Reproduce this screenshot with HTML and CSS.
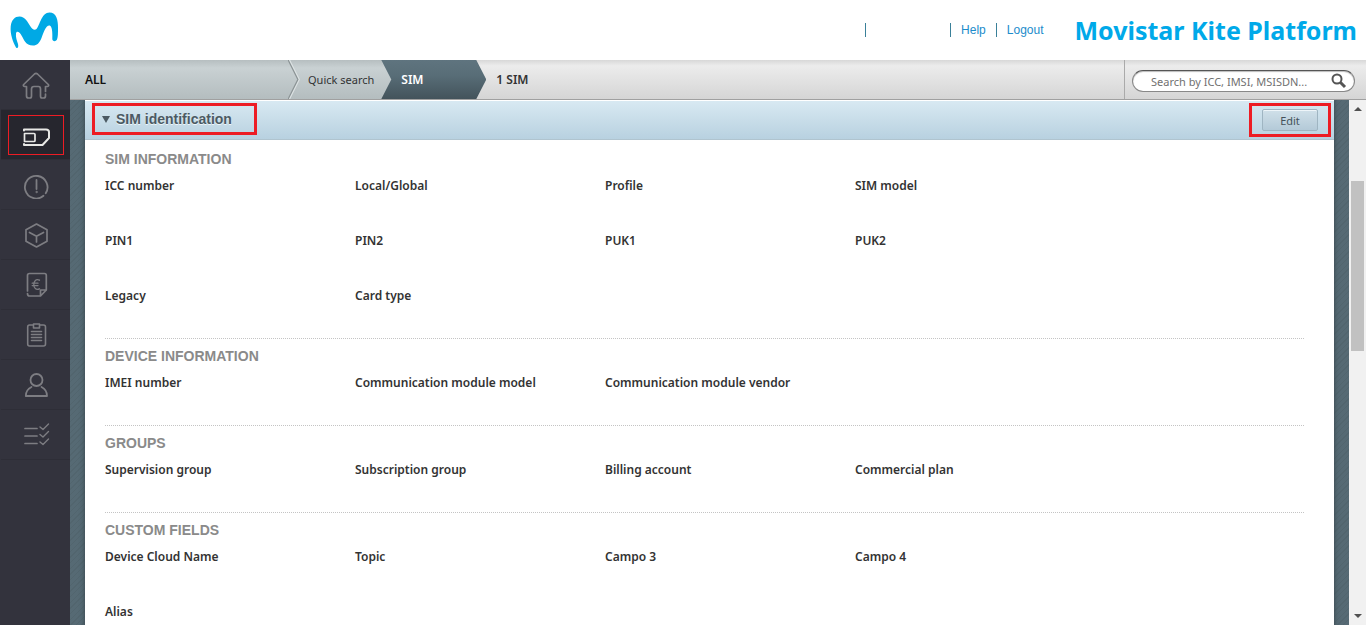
FILE: index.html
```html
<!DOCTYPE html>
<html lang="en">
<head>
<meta charset="utf-8">
<title>Movistar Kite Platform</title>
<link rel="stylesheet" href="styles.css">
</head>
<body>
<header class="topbar">
  <a class="logo" href="#" aria-label="Movistar">
    <svg width="50" height="38" viewBox="0 0 50 38"><path fill="#00a9e5" d="M6 36.500C3 31 0 23 .7 15.500C1.500 8.500 5 5.500 9.500 5.500C15 5.500 17.500 11 20.500 15.500C22 18 24.500 20 26.500 18C30 14 31.500 1.500 39.500 1.500C46.500 1.500 48 9 48 17C48 22 48 26 47 28.500C45.500 31 42.500 30.500 42.300 28C42.500 23.500 42.500 15.500 39.800 14.500C35.500 14 33.500 22 31.500 27C29.500 32 27 34.500 23 34.500C15.500 34.500 14 28.500 11.500 24.500C10 21.500 6.500 19 6 22.500C5.500 26 7 30 8 33C8.800 36.500 7.500 38 6 36.500Z"/></svg>
  </a>
  <nav class="links" aria-label="Account">
    <span class="account"></span>
    <a href="#">Help</a>
    <a href="#">Logout</a>
  </nav>
  <strong class="brand">Movistar Kite Platform</strong>
</header>
<div class="shell">
  <nav class="sidebar" aria-label="Main">
    <a href="#" aria-label="Home"><svg viewBox="0 0 28 28"><path stroke-width="1.700" d="M4.500 15.500H2.500Q.7 15 1.700 13.500L12.500 3Q14 1.700 15.500 3L26.300 13.500Q27.300 15 25.500 15.500H23.500V20.500M23.500 23V25Q23.500 27 21.500 27H20Q18.500 27 18.500 25V18Q18.500 15.500 16.500 15.500H12Q9.500 15.500 9.500 18V25Q9.500 27 8 27H6.500Q4.500 27 4.500 25V15.500"/></svg></a>
    <a href="#" class="active" aria-label="SIM inventory"><span class="mark"><svg viewBox="0 0 28 28"><path stroke-width="2" d="M2 9.500V8.500H24Q27 8.500 27 11V17L20.500 24H2V23"/><path stroke-width="1.700" d="M2.500 12.500H12Q13 12.500 13 13.500V19.500Q13 20.500 12 20.500H2.500Z"/></svg></span></a>
    <a href="#" aria-label="Alarms"><svg viewBox="0 0 28 28"><path stroke-width="1.800" d="M21.500 24.800A11.300 11.300 0 1 1 23.700 22.300M14.500 9V18"/><circle cx="14.500" cy="21" r=".7"/></svg></a>
    <a href="#" aria-label="Products"><svg viewBox="0 0 28 28"><path stroke-width="1.700" d="M14.500 3L25 8.800V20.200L14.500 26L4 20.200V8.800ZM7.500 11.500L14.500 15.300L21.500 11.500M14.500 15.300V21"/></svg></a>
    <a href="#" aria-label="Billing"><svg viewBox="0 0 28 28"><path stroke-width="1.700" d="M5.500 20V4.500Q5.500 2.500 7.500 2.500H22.500Q24.300 2.500 24.300 4.500V19L18.500 25H7.500Q5.500 25 5.500 22.500M18.500 25V19H24.300"/><path stroke-width="1.300" d="M17.500 9.200C14 7.500 11.800 10 11.800 13.500C11.800 17 14 19.500 17.500 17.800M10.200 12.200H16M10.200 14.600H16"/></svg></a>
    <a href="#" aria-label="Reports"><svg viewBox="0 0 28 28"><path stroke-width="1.600" d="M11.500 4H7.500Q5.700 4 5.700 6V23Q5.700 25 7.500 25H21.500Q23.500 25 23.500 23V6Q23.500 4 21.500 4H17.500M11.500 3H17.500V7H11.500ZM9.500 10.500H19.500M9.500 13.500H19.500M9.500 16.500H19.500M9.500 19.500H19.500"/></svg></a>
    <a href="#" aria-label="Users"><svg viewBox="0 0 28 28"><path stroke-width="1.800" d="M9.500 16C5.500 18 3.800 21.500 3.800 25H25C25 21.500 23.500 18 19.500 16"/><circle stroke-width="1.800" cx="14.500" cy="9" r="6"/></svg></a>
    <a href="#" aria-label="Tasks"><svg viewBox="0 0 28 28"><path stroke-width="1.700" d="M3 7.500H15M3 15H15M3 22.500H15"/><path stroke-width="1.400" d="M18 6L21 8.500L26.500 3M18 13.500L21 16L26.500 10.500M18 21L21 23.500L26.500 18"/></svg></a>
  </nav>
  <main class="main">
    <div class="crumbbar">
      <nav class="crumbs" aria-label="Breadcrumb">
        <a class="crumb all" href="#">ALL</a>
        <svg class="chevron" viewBox="0 0 12 40" aria-hidden="true"><path d="M1 0L11 20L1 40" fill="none" stroke="#dce2e3" stroke-width="2"/><path d="M0 0L10 20L0 40" fill="none" stroke="#8b9395" stroke-width="1.300"/></svg>
        <a class="crumb quick" href="#">Quick search</a>
        <a class="crumb current" href="#">SIM</a>
      </nav>
      <span class="count">1 SIM</span>
      <form class="search">
        <div class="field">
          <input type="search" aria-label="Search" placeholder="Search by ICC, IMSI, MSISDN...">
          <button type="button" aria-label="Run search"><svg width="16" height="16" viewBox="0 0 16 16"><circle cx="6" cy="6" r="4.500" fill="none" stroke="#555" stroke-width="2"/><path d="M9.500 9.500L14 14" stroke="#555" stroke-width="3"/></svg></button>
        </div>
      </form>
    </div>
    <div class="stage">
      <div class="canvas">
        <article class="panel">
          <div class="panel-head">
            <div class="callout title-box"><h1><span class="tri"></span>SIM identification</h1></div>
            <div class="callout edit-box"><button type="button" class="edit">Edit</button></div>
          </div>
          <div class="panel-body">
            <section><h2>SIM INFORMATION</h2>
              <div class="fields"><span>ICC number</span><span>Local/Global</span><span>Profile</span><span>SIM model</span><span>PIN1</span><span>PIN2</span><span>PUK1</span><span>PUK2</span><span>Legacy</span><span>Card type</span></div></section>
            <section><h2>DEVICE INFORMATION</h2>
              <div class="fields"><span>IMEI number</span><span>Communication module model</span><span>Communication module vendor</span></div></section>
            <section><h2>GROUPS</h2>
              <div class="fields"><span>Supervision group</span><span>Subscription group</span><span>Billing account</span><span>Commercial plan</span></div></section>
            <section><h2>CUSTOM FIELDS</h2>
              <div class="fields"><span>Device Cloud Name</span><span>Topic</span><span>Campo 3</span><span>Campo 4</span><span>Alias</span></div></section>
          </div>
        </article>
      </div>
      <div class="scrollbar" aria-hidden="true"><span class="up"></span><span class="track"><span class="thumb"></span></span><span class="down"></span></div>
    </div>
  </main>
</div>
</body>
</html>
```
FILE: styles.css
```css
* { box-sizing: border-box; }
body {
  margin: 0;
  height: 100vh;
  display: flex;
  flex-direction: column;
  overflow: hidden;
  background: #fff;
  color: #333;
  font: 12px "Noto Sans", "Open Sans", sans-serif;
}
a { text-decoration: none; color: inherit; }
button { font: inherit; cursor: pointer; }

.topbar {
  flex: 0 0 60px;
  display: flex;
  align-items: center;
  padding: 0 9px 0 10px;
}
.logo { display: flex; margin-right: auto; }
.links {
  display: flex;
  margin-right: 31px;
  font: 12px/14px "Liberation Sans", Arial, sans-serif;
  color: #1c8ccb;
}
.links > * { border-left: 1px solid #3a8099; padding: 0 10px; }
.links a:last-child { padding-right: 0; }
.account { width: 85px; }
.brand { font-size: 25px; line-height: 36px; color: #00a9e9; white-space: nowrap; }

.shell { flex: 1; display: flex; min-height: 0; }
.sidebar { flex: 0 0 70px; padding-left: 1px; background: #33333d; }
.sidebar a {
  height: 50px;
  display: flex;
  align-items: center;
  justify-content: center;
  border-bottom: 1px solid #2e2e37;
}
.sidebar svg {
  width: 28px;
  height: 28px;
  fill: none;
  stroke: #7d7d82;
  stroke-linecap: round;
  stroke-linejoin: round;
}
.sidebar .active { background: #26262e; }
.sidebar .active svg { stroke: #e8e8e6; }
.mark {
  width: 56px;
  height: 40px;
  border: 1px solid #ed1c24;
  display: flex;
  align-items: center;
  justify-content: center;
}

.main { flex: 1; min-width: 0; display: flex; flex-direction: column; }
.crumbbar {
  flex: 0 0 40px;
  display: flex;
  background: linear-gradient(#d8d8d8, #ececec 15%, #d5d5d5);
  border-bottom: 1px solid #a0a0a0;
}
.crumbs {
  display: flex;
  line-height: 39px;
  background: linear-gradient(#b6bec0, #c9d1d3 20%, #b4bdbf) left / calc(100% - 20px) 100% no-repeat;
}
.all { width: 218px; padding-left: 15px; font-weight: 600; color: #111; }
.chevron { width: 12px; height: 39px; }
.quick { padding: 0 7px 0 8px; font-size: 11px; }
.current {
  width: 105px;
  padding-left: 20px;
  font-weight: 600;
  color: #fff;
  background: linear-gradient(#5f747f, #586d77 40%, #43535b);
  clip-path: polygon(0 0, calc(100% - 10px) 0, 100% 50%, calc(100% - 10px) 100%, 0 100%, 10px 50%);
}
.count { padding-left: 10px; line-height: 39px; font-weight: 600; }
.search {
  margin-left: auto;
  padding: 0 11px 0 7px;
  border-left: 1px solid #aaa;
  display: flex;
  align-items: center;
}
.field {
  width: 223px;
  height: 22px;
  margin-top: 3px;
  display: flex;
  align-items: center;
  border: 1px solid #888;
  border-top-color: #555;
  border-radius: 11px;
  background: #fff;
  box-shadow: inset 0 1px 1px #bbb;
}
.field input {
  flex: 1;
  min-width: 0;
  padding: 0 0 0 18px;
  border: 0;
  background: none;
  font: 11px "Noto Sans", sans-serif;
}
.field input::placeholder { color: #707070; opacity: 1; }
.field button { display: flex; padding: 0; margin-right: 7px; border: 0; background: none; }

.stage { flex: 1; min-height: 0; display: flex; }
.canvas {
  flex: 1;
  min-width: 0;
  padding: 0 15px;
  overflow: hidden;
  background: repeating-linear-gradient(135deg, #566a74 0 3px, #52656e 3px 4px);
}
.panel { min-height: 100%; background: #fff; box-shadow: 0 0 5px #34434a; }
.panel-head {
  height: 40px;
  display: flex;
  justify-content: space-between;
  align-items: flex-start;
  padding: 2px 3px 0 7px;
  border-top: 1px solid #fff;
  border-bottom: 1px solid #b0c4cf;
  background: linear-gradient(#d8e9f2, #b8d1e0);
}
.callout { border: 3px solid #ed1c24; display: flex; align-items: center; justify-content: center; }
.title-box { width: 165px; height: 32px; justify-content: flex-start; padding-left: 7px; }
.edit-box { width: 82px; height: 34px; }
h1, h2 { margin: 0; font-family: "Liberation Sans", Arial, sans-serif; font-weight: bold; }
h1 { display: flex; align-items: center; gap: 6px; font-size: 14px; line-height: 18px; color: #4b5a63; text-shadow: 0 1px #eef6fa; }
.tri { border: 4px solid transparent; border-top: 7px solid #4b5a63; border-bottom: 0; }
.edit {
  width: 56px;
  height: 22px;
  padding: 0;
  border: 1px solid #9fb5c2;
  border-radius: 2px;
  background: linear-gradient(#d0e0e9, #b4cad8);
  box-shadow: inset 0 1px #eef5f9;
  font-size: 11px;
  color: #44525a;
}
.panel-body { padding: 2px 30px 0 20px; }
section { padding-top: 7px; border-bottom: 1px dotted #c4c4c4; }
h2 { height: 24px; font-size: 14px; line-height: 20px; color: #8a8a8a; }
.fields { display: grid; grid-template-columns: repeat(4, 250px); grid-auto-rows: 55px; }
.fields span { line-height: 26px; font-weight: 600; white-space: nowrap; }

.scrollbar {
  flex: 0 0 17px;
  display: flex;
  flex-direction: column;
  align-items: center;
  padding: 7px 0;
  background: #f1f1f1;
}
.track { flex: 1; width: 13px; padding-top: 70px; }
.thumb { display: block; height: 170px; background: #c1c1c1; }
.up, .down { border: 4px solid transparent; }
.up { border-top: 0; border-bottom-color: #505050; }
.down { border-bottom: 0; border-top-color: #505050; }
```
